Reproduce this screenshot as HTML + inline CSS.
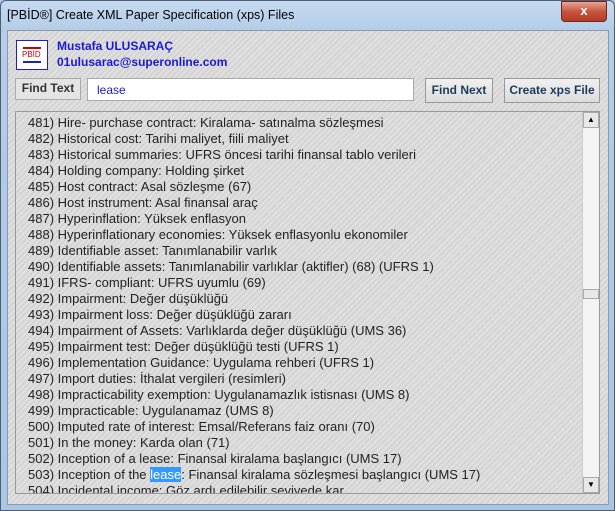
<html><head><style>
body{margin:0;width:615px;height:511px;overflow:hidden;background:#a9c6e2;font-family:"Liberation Sans",sans-serif;position:relative}
.frame{position:absolute;left:0;top:0;width:613px;height:509px;border:1px solid #4d5e74;border-radius:6px 6px 0 0;background:linear-gradient(#c5daf0,#b4cde8 30px,#a9c6e2)}
.title{position:absolute;left:7px;top:8px;font-size:12.5px;color:#000}
.close{position:absolute;left:561px;top:1px;width:44px;height:19px;background:linear-gradient(#e8a496,#c8553f 50%,#b53b22);border:1px solid #6b2a20;border-radius:0 0 4px 4px;color:#fff;font-weight:bold;font-size:13px;text-align:center;line-height:18px}
.client{position:absolute;left:7px;top:30px;width:600px;height:473px;background:#dadada;background-image:repeating-linear-gradient(135deg,#d2d2d2 0 1px,#e0e0e0 1px 3px,#d6d6d6 3px 4px);border:1px solid #8a9bb0}
.logo{position:absolute;left:16px;top:40px;width:30px;height:28px;border:1px solid #2020c0;background:#fff}
.n{position:absolute;left:57px;font-size:12px;font-weight:bold;color:#1a1ad0}
.lbl{position:absolute;left:15px;top:78px;width:64px;height:20px;background:#e4e4e4;border:1px solid #aaa;font-size:12px;font-weight:bold;color:#333;line-height:18px;text-align:center}
.inp{position:absolute;left:87px;top:78px;width:327px;height:23px;background:#fff;border:1px solid #aaa;font-size:12px;color:#1a1ad0;line-height:22px;padding-left:9px;box-sizing:border-box}
.btn{position:absolute;top:78px;height:23px;background:linear-gradient(#f0f0f0,#dcdcdc);border:1px solid #999;font-size:12px;font-weight:bold;color:#1e3a5a;text-align:center;line-height:23px}
.list{position:absolute;left:15px;top:111px;width:583px;height:381px;border:1px solid #999;overflow:hidden}
.list .t{position:absolute;left:12px;font-size:13px;color:#222;white-space:nowrap}
.sb{position:absolute;right:0;top:0;width:16px;height:381px;background:#f4f4f4;border-left:1px solid #ccc}
.sb div{position:absolute;left:0;width:16px;background:#e8e8e8;border:1px solid #aaa;box-sizing:border-box;font-size:8px;text-align:center;line-height:14px;color:#000}
.hl{background:#3399ff;color:#fff}
</style></head><body>
<div class="frame"></div>
<div class="title">[PBİD®] Create XML Paper Specification (xps) Files</div>
<div class="close">x</div>
<div class="client"></div>
<div class="logo"><div style="position:absolute;left:6px;top:6px;width:18px;height:2px;background:#c00"></div><div style="position:absolute;left:5px;top:9px;font-size:8px;color:#c00">PBİD</div><div style="position:absolute;left:6px;top:20px;width:18px;height:2px;background:#22a"></div></div>
<div class="n" style="top:39px">Mustafa ULUSARAÇ</div>
<div class="n" style="top:55px">01ulusarac@superonline.com</div>
<div class="lbl">Find Text</div>
<div class="inp">lease</div>
<div class="btn" style="left:425px;width:66px">Find Next</div>
<div class="btn" style="left:504px;width:94px">Create xps File</div>
<div class="list">
<div class="t" style="top:3px">481) Hire- purchase contract: Kiralama- satınalma sözleşmesi</div>
<div class="t" style="top:19px">482) Historical cost: Tarihi maliyet, fiili maliyet</div>
<div class="t" style="top:35px">483) Historical summaries: UFRS öncesi tarihi finansal tablo verileri</div>
<div class="t" style="top:51px">484) Holding company: Holding şirket</div>
<div class="t" style="top:67px">485) Host contract: Asal sözleşme (67)</div>
<div class="t" style="top:83px">486) Host instrument: Asal finansal araç</div>
<div class="t" style="top:99px">487) Hyperinflation: Yüksek enflasyon</div>
<div class="t" style="top:115px">488) Hyperinflationary economies: Yüksek enflasyonlu ekonomiler</div>
<div class="t" style="top:131px">489) Identifiable asset: Tanımlanabilir varlık</div>
<div class="t" style="top:147px">490) Identifiable assets: Tanımlanabilir varlıklar (aktifler) (68) (UFRS 1)</div>
<div class="t" style="top:163px">491) IFRS- compliant: UFRS uyumlu (69)</div>
<div class="t" style="top:179px">492) Impairment: Değer düşüklüğü</div>
<div class="t" style="top:195px">493) Impairment loss: Değer düşüklüğü zararı</div>
<div class="t" style="top:211px">494) Impairment of Assets: Varlıklarda değer düşüklüğü (UMS 36)</div>
<div class="t" style="top:227px">495) Impairment test: Değer düşüklüğü testi (UFRS 1)</div>
<div class="t" style="top:243px">496) Implementation Guidance: Uygulama rehberi (UFRS 1)</div>
<div class="t" style="top:259px">497) Import duties: İthalat vergileri (resimleri)</div>
<div class="t" style="top:275px">498) Impracticability exemption: Uygulanamazlık istisnası (UMS 8)</div>
<div class="t" style="top:291px">499) Impracticable: Uygulanamaz (UMS 8)</div>
<div class="t" style="top:307px">500) Imputed rate of interest: Emsal/Referans faiz oranı  (70)</div>
<div class="t" style="top:323px">501) In the money: Karda olan (71)</div>
<div class="t" style="top:339px">502) Inception of a lease: Finansal kiralama başlangıcı (UMS 17)</div>
<div class="t" style="top:355px">503) Inception of the <span class="hl">lease</span>: Finansal kiralama sözleşmesi başlangıcı (UMS 17)</div>
<div class="t" style="top:371px">504) Incidental income: Göz ardı edilebilir seviyede kar</div>
<div class="sb">
<div style="top:0;height:16px">▲</div>
<div style="top:177px;height:10px"></div>
<div style="bottom:0;height:16px">▼</div>
</div>
</div>
</body></html>
